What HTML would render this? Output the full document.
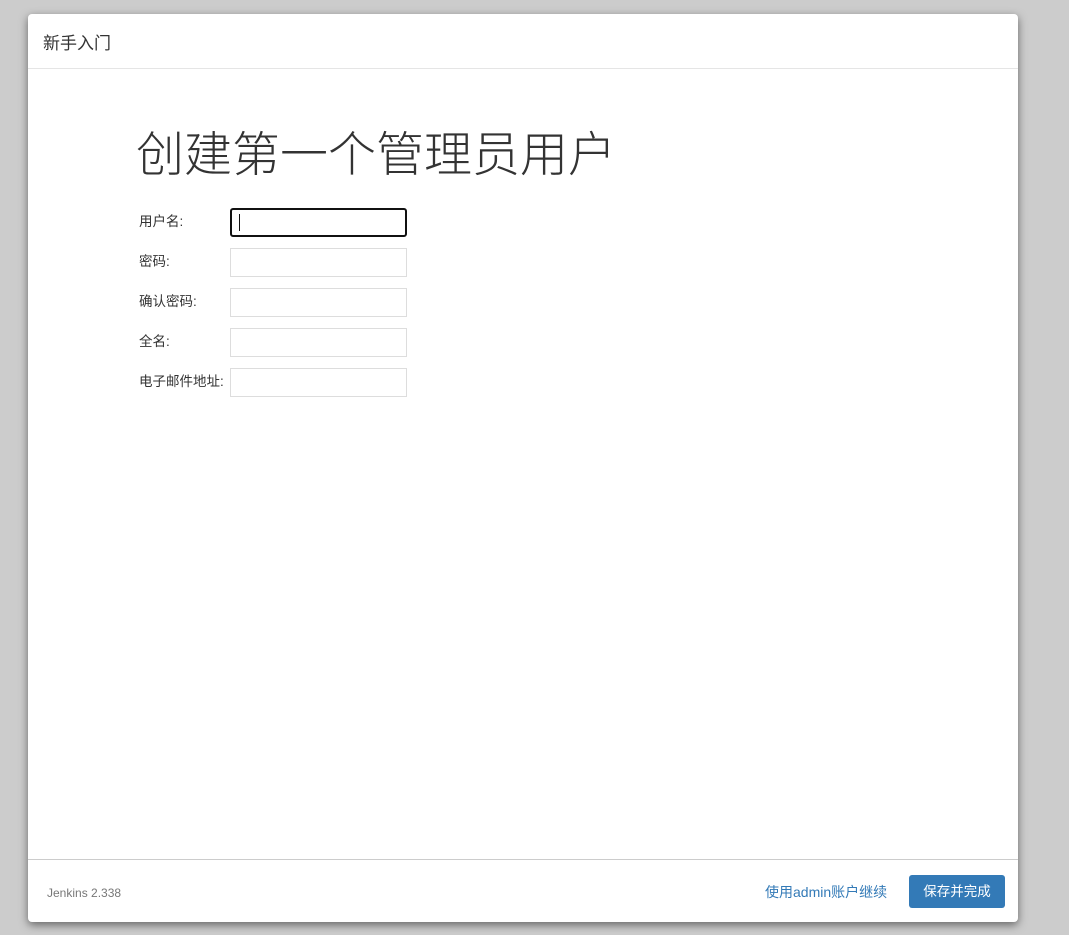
<!DOCTYPE html>
<html><head><meta charset="utf-8"><style>
html,body{margin:0;padding:0;width:1069px;height:935px;background:#ccc;overflow:hidden;font-family:"Liberation Sans","Noto Sans CJK SC",sans-serif;color:#333}
.dlg{position:absolute;left:28px;top:14px;width:990px;height:908px;background:#fff;border-radius:4px;box-shadow:0 3px 9px rgba(0,0,0,.5)}
.hd{height:55px;border-bottom:1px solid #e5e5e5;box-sizing:border-box;padding:15px 0 0 15px;font-size:17px}
h1{position:absolute;left:108px;top:110px;margin:0;font-weight:300;font-size:48px;line-height:64px;color:#333}
.row{position:absolute;left:111px;font-size:13.5px;height:28px;line-height:28px}
.row span{position:absolute;left:0;top:0;white-space:nowrap}
.row i{position:absolute;left:91px;top:0;width:177px;height:29px;box-sizing:border-box;border:1px solid #ddd;background:#fff}
.row i.f{border:2px solid #111;border-radius:3px}
.row i.f:after{content:"";position:absolute;left:7px;top:4px;width:1px;height:17px;background:#111}
.ft{position:absolute;left:0;right:0;bottom:0;height:62px;border-top:1px solid #ccc}
.ver{position:absolute;left:19px;top:26px;font-size:12px;color:#777}
.lnk{position:absolute;left:737px;top:22px;font-size:14px;color:#337ab7}
.btn{position:absolute;left:881px;top:15px;width:96px;height:33px;background:#337ab7;border-radius:3px;color:#fff;font-size:13.5px;line-height:34px;text-align:center}
</style></head><body>
<div class="dlg">
<div class="hd">新手入门</div>
<h1>创建第一个管理员用户</h1>
<div class="row" style="top:194px"><span>用户名:</span><i class="f"></i></div>
<div class="row" style="top:234px"><span>密码:</span><i></i></div>
<div class="row" style="top:274px"><span>确认密码:</span><i></i></div>
<div class="row" style="top:314px"><span>全名:</span><i></i></div>
<div class="row" style="top:354px"><span>电子邮件地址:</span><i></i></div>
<div class="ft"><div class="ver">Jenkins 2.338</div><div class="lnk">使用admin账户继续</div><div class="btn">保存并完成</div></div>
</div>
</body></html>
